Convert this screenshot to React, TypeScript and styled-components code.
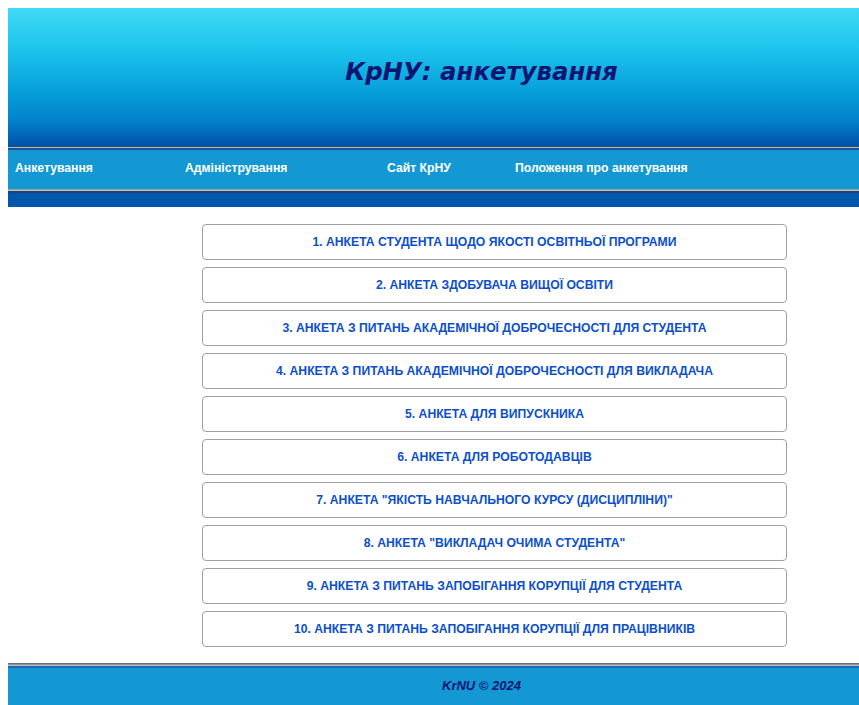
import styled, { createGlobalStyle } from 'styled-components';

const SURVEYS = [
  '1. АНКЕТА СТУДЕНТА ЩОДО ЯКОСТІ ОСВІТНЬОЇ ПРОГРАМИ',
  '2. АНКЕТА ЗДОБУВАЧА ВИЩОЇ ОСВІТИ',
  '3. АНКЕТА З ПИТАНЬ АКАДЕМІЧНОЇ ДОБРОЧЕСНОСТІ ДЛЯ СТУДЕНТА',
  '4. АНКЕТА З ПИТАНЬ АКАДЕМІЧНОЇ ДОБРОЧЕСНОСТІ ДЛЯ ВИКЛАДАЧА',
  '5. АНКЕТА ДЛЯ ВИПУСКНИКА',
  '6. АНКЕТА ДЛЯ РОБОТОДАВЦІВ',
  '7. АНКЕТА "ЯКІСТЬ НАВЧАЛЬНОГО КУРСУ (ДИСЦИПЛІНИ)"',
  '8. АНКЕТА "ВИКЛАДАЧ ОЧИМА СТУДЕНТА"',
  '9. АНКЕТА З ПИТАНЬ ЗАПОБІГАННЯ КОРУПЦІЇ ДЛЯ СТУДЕНТА',
  '10. АНКЕТА З ПИТАНЬ ЗАПОБІГАННЯ КОРУПЦІЇ ДЛЯ ПРАЦІВНИКІВ',
];

const MENU = [
  { label: 'Анкетування', width: 170 },
  { label: 'Адміністрування', width: 202 },
  { label: 'Сайт КрНУ', width: 128 },
  { label: 'Положення про анкетування', width: 240 },
];

const GlobalStyle = createGlobalStyle`
  body {
    margin: 8px 0 0 8px;
    background: #fff;
    font-family: 'Liberation Sans', Arial, sans-serif;
    overflow: hidden;
  }
`;

const Page = styled.div`
  display: flex;
  flex-direction: column;
`;

const Header = styled.header`
  height: 138px;
  display: flex;
  align-items: center;
  justify-content: center;
  padding-left: 96px;
  background: linear-gradient(to bottom, #41d9f6 0%, #1cc4ec 30%, #07a0db 60%, #0381cb 82%, #0052a6 100%);
`;

const Title = styled.h1`
  margin: 0 0 12px;
  font-family: 'DejaVu Sans', Verdana, sans-serif;
  font-size: 24.4px;
  font-weight: bold;
  font-style: italic;
  color: #0b1672;
`;

/* double rule between header bands */
const Rule = styled.div<{ bottom?: boolean }>`
  height: 4px;
  background: ${(p) =>
    p.bottom
      ? 'linear-gradient(to bottom, #98a8a0 0 1px, #b8c49a 1px 2px, #1c3f86 2px 4px)'
      : 'linear-gradient(to bottom, #1e4c94 0 1px, #b2bf9c 1px 2px, #1d4f9c 2px 4px)'};
`;

const Nav = styled.nav`
  height: 39px;
  display: flex;
  align-items: center;
  padding: 0 0 3px 7px;
  box-sizing: border-box;
  background: #1398d4;
`;

const NavLink = styled.a<{ $w: number }>`
  width: ${(p) => p.$w}px;
  flex: none;
  color: #fff;
  font-size: 12.2px;
  font-weight: bold;
  text-decoration: none;
`;

const Strip = styled.div`
  height: 14px;
  background: #0058ad;
`;

const Main = styled.main`
  display: flex;
  flex-direction: column;
  gap: 7px;
  padding: 17px 0 16px 194px;
`;

const SurveyButton = styled.a`
  width: 585px;
  height: 36px;
  box-sizing: border-box;
  display: flex;
  align-items: center;
  justify-content: center;
  border: 1.5px solid #a0a0a0;
  border-radius: 4px;
  background: #fff;
  color: #0c4fcc;
  font-size: 12.2px;
  font-weight: bold;
  text-decoration: none;
`;

const FooterRule = styled.div`
  height: 5px;
  background: linear-gradient(to bottom, #5f6f82 0 1px, #8a96a0 1px 2px, #b4c2a6 2px 3px, #2a62b4 3px 5px);
`;

const Footer = styled.footer`
  height: 40px;
  display: flex;
  justify-content: center;
  padding: 10px 0 0 96px;
  box-sizing: border-box;
  background: #1398d4;
  color: #0b1672;
  font-size: 13px;
  font-weight: bold;
  font-style: italic;
`;

export default function App() {
  return (
    <Page>
      <GlobalStyle />
      <Header>
        <Title>КрНУ: анкетування</Title>
      </Header>
      <Rule />
      <Nav>
        {MENU.map(({ label, width }) => (
          <NavLink key={label} $w={width} href="#">
            {label}
          </NavLink>
        ))}
      </Nav>
      <Rule bottom />
      <Strip />
      <Main>
        {SURVEYS.map((s) => (
          <SurveyButton key={s} href="#">
            {s}
          </SurveyButton>
        ))}
      </Main>
      <FooterRule />
      <Footer>KrNU © 2024</Footer>
    </Page>
  );
}
